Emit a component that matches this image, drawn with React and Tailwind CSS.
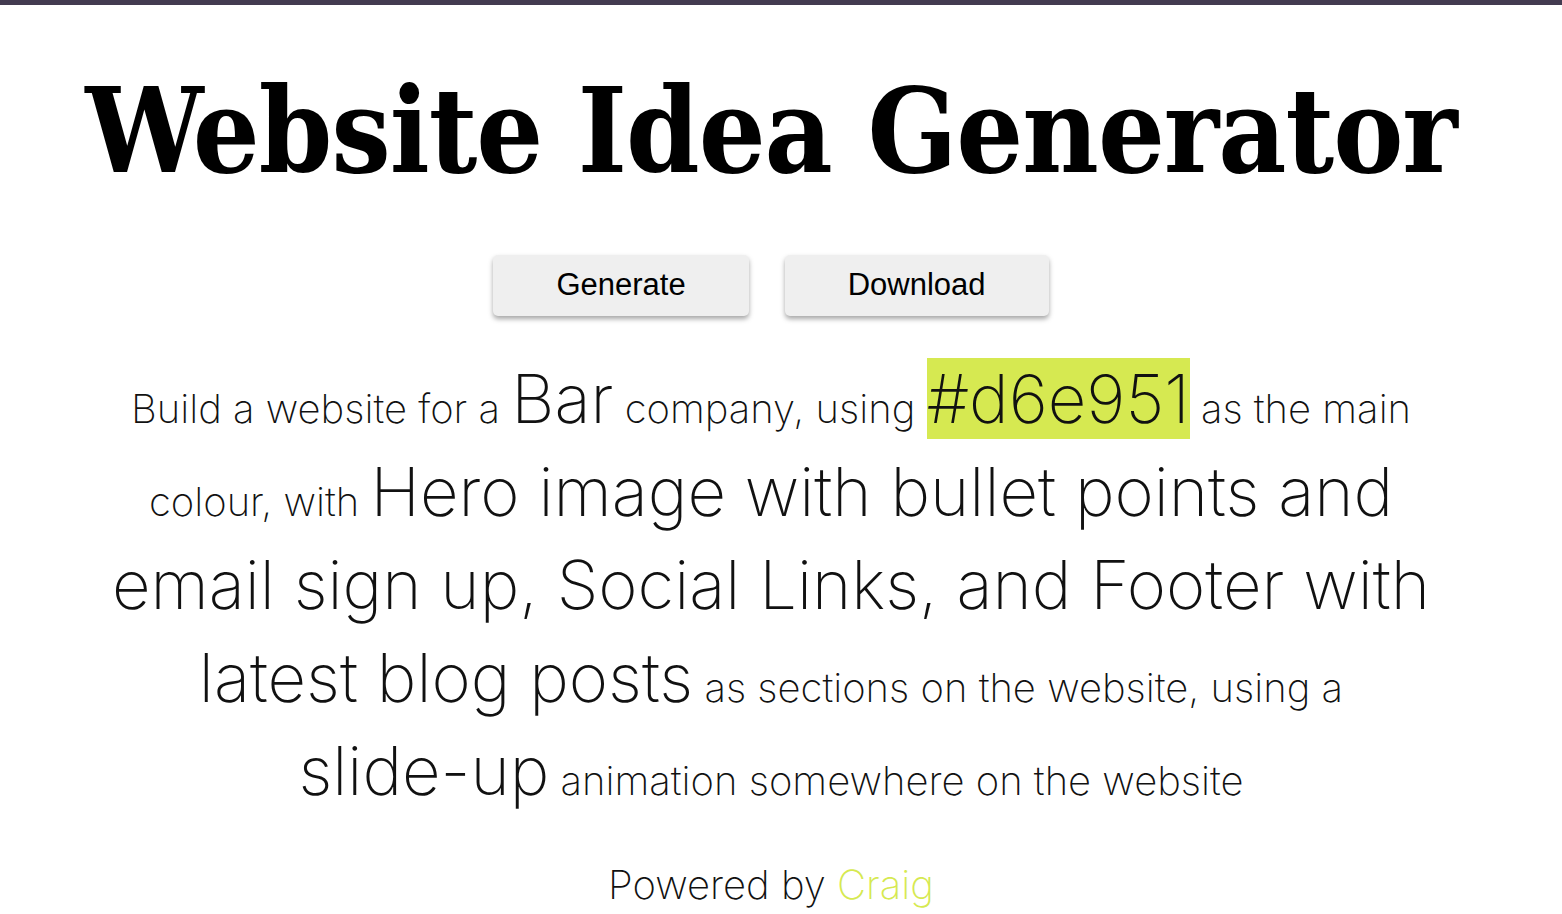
import React from 'react';

const slab = { fontFamily: '"DejaVu Serif Condensed", "DejaVu Serif", serif' };
const body = { fontFamily: 'Inter, "Open Sans", sans-serif' };

const App = () => {
  return (
    <div className="min-h-screen bg-white border-t-[5px] border-[#433b50] pr-[20px] flex flex-col items-center">
      <h1
        style={slab}
        className="mt-[68px] text-[117px] font-bold leading-[117px] text-black tracking-[-1px]"
      >
        Website Idea Generator
      </h1>

      <div className="mt-[65px] flex gap-[36px]" style={{ fontFamily: '"Liberation Sans", Arial, sans-serif' }}>
        <button className="h-[61px] px-[63px] bg-[#efefef] rounded-[5px] text-[31px] text-black shadow-[0_3px_5px_rgba(0,0,0,0.35)]">
          Generate
        </button>
        <button className="h-[61px] px-[63px] bg-[#efefef] rounded-[5px] text-[31px] text-black shadow-[0_3px_5px_rgba(0,0,0,0.35)]">
          Download
        </button>
      </div>

      <p
        style={body}
        className="mt-[46px] text-center font-extralight leading-[93px] text-[40px] text-[#111]"
      >
        Build a website for a <span className="text-[67px] leading-none">Bar</span> company, using{' '}
        <span className="text-[67px] leading-none bg-[#d6e951]">#d6e951</span> as the main
        <br />
        colour, with{' '}
        <span className="text-[67px] leading-none">
          Hero image with bullet points and
          <br />
          email sign up, Social Links, and Footer with
          <br />
          latest blog posts
        </span>{' '}
        as sections on the website, using a
        <br />
        <span className="text-[67px] leading-none">slide-up</span> animation somewhere on the website
      </p>

      <footer style={body} className="mt-[38px] text-[40px] leading-none font-extralight text-[#111]">
        Powered by <span className="text-[#d6e951]">Craig</span>
      </footer>
    </div>
  );
};

export default App;
